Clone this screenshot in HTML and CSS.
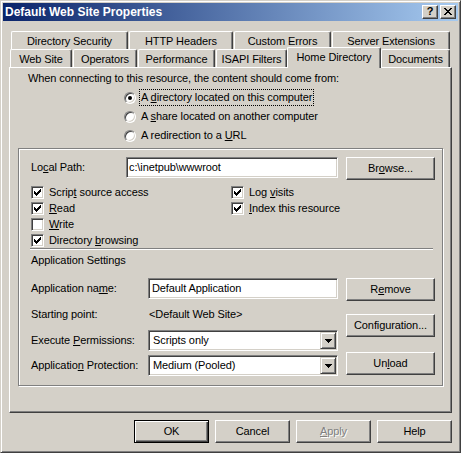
FILE: index.html
```html
<!DOCTYPE html>
<html>
<head>
<meta charset="utf-8">
<title>Default Web Site Properties</title>
<link rel="stylesheet" href="styles.css">
</head>
<body>
<div class="window">
  <div class="titlebar">
    <span class="title">Default Web Site Properties</span>
    <div class="caption-buttons">
      <span class="cap-btn cap-help">?</span>
      <span class="cap-btn cap-close">
        <svg width="8" height="7" viewBox="0 0 8 7" shape-rendering="crispEdges"><path d="M0 0h2v1H0zM6 0h2v1H6zM1 1h2v1H1zM5 1h2v1H5zM2 2h4v1H2zM3 3h2v1H3zM2 4h4v1H2zM1 5h2v1H1zM5 5h2v1H5zM0 6h2v1H0zM6 6h2v1H6z" fill="#000"/></svg>
      </span>
    </div>
  </div>

  <div class="dialog">
    <div class="tabs">
      <div class="tab-row row-back">
        <div class="tab tab-dirsec">Directory Security</div>
        <div class="tab tab-http">HTTP Headers</div>
        <div class="tab tab-errors">Custom Errors</div>
        <div class="tab tab-ext">Server Extensions</div>
      </div>
      <div class="tab-row row-front">
        <div class="tab tab-site">Web Site</div>
        <div class="tab tab-ops">Operators</div>
        <div class="tab tab-perf">Performance</div>
        <div class="tab tab-isapi">ISAPI Filters</div>
        <div class="tab tab-home selected">Home Directory</div>
        <div class="tab tab-docs">Documents</div>
      </div>
    </div>

    <div class="panel">
      <p class="intro">When connecting to this resource, the content should come from:</p>
      <div class="radios">
        <div class="radio-row"><span class="radio checked"></span><span class="radio-label focus">A <u>d</u>irectory located on this computer</span></div>
        <div class="radio-row"><span class="radio"></span><span class="radio-label">A <u>s</u>hare located on another computer</span></div>
        <div class="radio-row"><span class="radio"></span><span class="radio-label">A redirection to a <u>U</u>RL</span></div>
      </div>

      <div class="group">
        <div class="path-row">
          <span class="path-label">Lo<u>c</u>al Path:</span>
          <div class="textbox path-box">c:\inetpub\wwwroot</div>
          <div class="btn btn-side">Br<u>o</u>wse...</div>
        </div>

        <div class="checks">
          <div class="check-col check-col-left">
            <div class="check-item"><span class="checkbox on"><svg width="7" height="7" viewBox="0 0 7 7" shape-rendering="crispEdges"><path d="M6 0h1v1H6zM5 1h2v1H5zM0 2h1v1H0zM4 2h3v1H4zM0 3h2v1H0zM3 3h3v1H3zM0 4h5v1H0zM1 5h3v1H1zM2 6h1v1H2z" fill="#000"/></svg></span><span>Scrip<u>t</u> source access</span></div>
            <div class="check-item"><span class="checkbox on"><svg width="7" height="7" viewBox="0 0 7 7" shape-rendering="crispEdges"><path d="M6 0h1v1H6zM5 1h2v1H5zM0 2h1v1H0zM4 2h3v1H4zM0 3h2v1H0zM3 3h3v1H3zM0 4h5v1H0zM1 5h3v1H1zM2 6h1v1H2z" fill="#000"/></svg></span><span><u>R</u>ead</span></div>
            <div class="check-item"><span class="checkbox"></span><span><u>W</u>rite</span></div>
            <div class="check-item"><span class="checkbox on"><svg width="7" height="7" viewBox="0 0 7 7" shape-rendering="crispEdges"><path d="M6 0h1v1H6zM5 1h2v1H5zM0 2h1v1H0zM4 2h3v1H4zM0 3h2v1H0zM3 3h3v1H3zM0 4h5v1H0zM1 5h3v1H1zM2 6h1v1H2z" fill="#000"/></svg></span><span>Directory <u>b</u>rowsing</span></div>
          </div>
          <div class="check-col">
            <div class="check-item"><span class="checkbox on"><svg width="7" height="7" viewBox="0 0 7 7" shape-rendering="crispEdges"><path d="M6 0h1v1H6zM5 1h2v1H5zM0 2h1v1H0zM4 2h3v1H4zM0 3h2v1H0zM3 3h3v1H3zM0 4h5v1H0zM1 5h3v1H1zM2 6h1v1H2z" fill="#000"/></svg></span><span>Log <u>v</u>isits</span></div>
            <div class="check-item"><span class="checkbox on"><svg width="7" height="7" viewBox="0 0 7 7" shape-rendering="crispEdges"><path d="M6 0h1v1H6zM5 1h2v1H5zM0 2h1v1H0zM4 2h3v1H4zM0 3h2v1H0zM3 3h3v1H3zM0 4h5v1H0zM1 5h3v1H1zM2 6h1v1H2z" fill="#000"/></svg></span><span><u>I</u>ndex this resource</span></div>
          </div>
        </div>

        <div class="separator"></div>
        <div class="section-title">Application Settings</div>

        <div class="app">
          <div class="app-fields">
            <div class="field-row">
              <span class="field-label">Application na<u>m</u>e:</span>
              <div class="textbox app-box">Default Application</div>
            </div>
            <div class="field-row text-row">
              <span class="field-label">Starting point:</span>
              <span class="field-value">&lt;Default Web Site&gt;</span>
            </div>
            <div class="field-row combo-row-1">
              <span class="field-label">Execute <u>P</u>ermissions:</span>
              <div class="textbox combo"><span class="combo-text">Scripts only</span><span class="combo-btn"><svg width="7" height="4" viewBox="0 0 7 4" shape-rendering="crispEdges"><path d="M0 0h7v1H0zM1 1h5v1H1zM2 2h3v1H2zM3 3h1v1H3z" fill="#000"/></svg></span></div>
            </div>
            <div class="field-row combo-row-2">
              <span class="field-label">Applicatio<u>n</u> Protection:</span>
              <div class="textbox combo"><span class="combo-text">Medium (Pooled)</span><span class="combo-btn"><svg width="7" height="4" viewBox="0 0 7 4" shape-rendering="crispEdges"><path d="M0 0h7v1H0zM1 1h5v1H1zM2 2h3v1H2zM3 3h1v1H3z" fill="#000"/></svg></span></div>
            </div>
          </div>
          <div class="app-buttons">
            <div class="btn btn-side">R<u>e</u>move</div>
            <div class="btn btn-side btn-config">Configuration...</div>
            <div class="btn btn-side btn-unload">Un<u>l</u>oad</div>
          </div>
        </div>
      </div>
    </div>

    <div class="dialog-buttons">
      <div class="btn btn-dlg btn-default">OK</div>
      <div class="btn btn-dlg">Cancel</div>
      <div class="btn btn-dlg btn-disabled"><u>A</u>pply</div>
      <div class="btn btn-dlg">Help</div>
    </div>
  </div>
</div>
</body>
</html>
```

FILE: styles.css
```css
* { box-sizing: border-box; }

html, body {
  margin: 0;
  padding: 0;
}

body {
  width: 461px;
  height: 453px;
  overflow: hidden;
  background: #d4d0c8;
  font-family: "Liberation Sans", Arial, sans-serif;
  font-size: 11px;
  line-height: 13px;
  letter-spacing: -0.1px;
  color: #000;
}

u { text-decoration: underline; text-underline-offset: 1px; }

.window {
  width: 461px;
  height: 453px;
  background: #d4d0c8;
  border: 1px solid;
  border-color: #d4d0c8 #404040 #404040 #d4d0c8;
  box-shadow: inset 1px 1px #fff, inset -1px -1px #808080;
  padding: 2px;
  display: flex;
  flex-direction: column;
}

/* ---------- title bar ---------- */
.titlebar {
  height: 18px;
  flex: none;
  background: linear-gradient(to right, #0a246a, #a6caf0);
  display: flex;
  align-items: center;
  justify-content: space-between;
  padding: 0 2px 0 2px;
}

.title {
  color: #fff;
  font-weight: bold;
  font-size: 12px;
  letter-spacing: 0;
}

.caption-buttons {
  display: flex;
  gap: 2px;
}

.cap-btn {
  width: 16px;
  height: 14px;
  background: #d4d0c8;
  border: 1px solid;
  border-color: #fff #404040 #404040 #fff;
  box-shadow: inset -1px -1px #808080;
  display: flex;
  align-items: center;
  justify-content: center;
}

.cap-help {
  font-weight: bold;
  font-size: 11px;
  line-height: 11px;
  padding-bottom: 1px;
}

.cap-close svg { display: block; margin-top: -1px; }

/* ---------- dialog ---------- */
.dialog {
  flex: 1;
  padding: 10px 6px 0 6px;
  display: flex;
  flex-direction: column;
}

.tabs {
  display: flex;
  flex-direction: column;
}

.tab-row {
  display: flex;
  height: 18px;
  align-items: flex-end;
  gap: 1px;
}

.row-back { padding-left: 2px; }
.row-front { padding-left: 1px; }

.tab {
  height: 18px;
  background: #d4d0c8;
  border-top: 1px solid #fff;
  border-left: 1px solid #fff;
  border-right: 1px solid #404040;
  box-shadow: inset -1px 0 #808080;
  border-radius: 2px 2px 0 0;
  display: flex;
  align-items: center;
  justify-content: center;
  padding-top: 1px;
  white-space: nowrap;
}

.tab-dirsec { width: 117px; }
.tab-http { width: 104px; }
.tab-errors { width: 97px; }
.tab-ext { width: 118px; }

.tab-site { width: 62px; }
.tab-ops { width: 64px; }
.tab-perf { width: 77px; }
.tab-isapi { width: 71px; }
.tab-home { width: 92px; }
.tab-docs { width: 69px; }

.tab.selected {
  position: relative;
  z-index: 2;
  height: 21px;
  width: 94px;
  margin: 0 -1px -1px -1px;
  padding-top: 0;
  padding-bottom: 2px;
}

/* ---------- panel ---------- */
.panel {
  height: 346px;
  flex: none;
  border-top: 1px solid #fff;
  border-left: 1px solid #fff;
  border-right: 1px solid #404040;
  border-bottom: 1px solid #404040;
  box-shadow: inset -1px -1px #808080;
  padding: 4px 8px 0 8px;
}

.intro {
  margin: 0 0 0 10px;
  height: 13px;
}

.radios {
  margin: 3px 0 0 106px;
  display: flex;
  flex-direction: column;
}

.radio-row {
  height: 19px;
  display: flex;
  align-items: center;
}

.radio {
  width: 12px;
  height: 12px;
  flex: none;
  border-radius: 50%;
  background: #fff;
  border: 1px solid;
  border-color: #808080 #fff #fff #808080;
  box-shadow: inset 1px 1px #404040, inset -1px -1px #d4d0c8;
  display: flex;
  align-items: center;
  justify-content: center;
}

.radio.checked::after {
  content: "";
  width: 4px;
  height: 4px;
  border-radius: 50%;
  background: #000;
}

.radio-label {
  margin-left: 3px;
  padding: 1px 1px;
  border: 1px dotted transparent;
}

.radio-label.focus { border-color: #000; }

/* ---------- group box ---------- */
.group {
  margin-top: 3px;
  border: 1px solid #808080;
  box-shadow: inset 1px 1px #fff, 1px 1px #fff;
  padding: 8px 7px 9px 12px;
}

.path-row {
  display: flex;
  align-items: flex-start;
}

.path-label {
  width: 95px;
  flex: none;
  line-height: 21px;
}

.textbox {
  height: 21px;
  background: #fff;
  border: 1px solid;
  border-color: #808080 #fff #fff #808080;
  box-shadow: inset 1px 1px #404040, inset -1px -1px #d4d0c8;
  display: flex;
  align-items: center;
  padding-left: 2px;
  white-space: nowrap;
}

.path-box { width: 212px; }

.btn {
  height: 23px;
  background: #d4d0c8;
  border: 1px solid;
  border-color: #fff #404040 #404040 #fff;
  box-shadow: inset -1px -1px #808080;
  display: flex;
  align-items: center;
  justify-content: center;
  white-space: nowrap;
}

.btn-side { width: 89px; flex: none; }
.path-row .btn-side { margin-left: auto; }

.checks {
  margin-top: 6px;
  display: flex;
}

.check-col {
  display: flex;
  flex-direction: column;
  gap: 3px;
}

.check-col-left { width: 200px; }

.check-item {
  height: 13px;
  display: flex;
  align-items: center;
}

.checkbox {
  width: 13px;
  height: 13px;
  flex: none;
  margin-right: 5px;
  background: #fff;
  border: 1px solid;
  border-color: #808080 #fff #fff #808080;
  box-shadow: inset 1px 1px #404040, inset -1px -1px #d4d0c8;
  display: flex;
  align-items: center;
  justify-content: center;
}

.checkbox svg { display: block; }

.separator {
  margin: 1px 2px 0 -1px;
  height: 2px;
  border-top: 1px solid #808080;
  border-bottom: 1px solid #fff;
}

.section-title {
  margin-top: 4px;
  height: 13px;
}

.app {
  margin-top: 11px;
  display: flex;
  align-items: flex-start;
}

.app-fields {
  display: flex;
  flex-direction: column;
}

.field-row {
  display: flex;
  align-items: center;
}

.field-label {
  width: 117px;
  flex: none;
}

.app-box { width: 190px; padding-left: 3px; }

.text-row { margin-top: 9px; height: 13px; }
.field-value { padding-left: 1px; }
.combo-row-1 { margin-top: 9px; }
.combo-row-2 { margin-top: 4px; }

.combo {
  width: 190px;
  padding-left: 4px;
  padding-right: 1px;
}

.combo-text { flex: 1; }

.combo-btn {
  width: 16px;
  height: 17px;
  flex: none;
  background: #d4d0c8;
  border: 1px solid;
  border-color: #d4d0c8 #404040 #404040 #d4d0c8;
  box-shadow: inset 1px 1px #fff, inset -1px -1px #808080;
  display: flex;
  align-items: center;
  justify-content: center;
}

.combo-btn svg { display: block; margin-top: 1px; }

.app-buttons {
  margin-left: auto;
  display: flex;
  flex-direction: column;
}

.btn-config { margin-top: 13px; }
.btn-unload { margin-top: 15px; }

/* ---------- bottom buttons ---------- */
.dialog-buttons {
  margin-top: 7px;
  display: flex;
  justify-content: flex-end;
  gap: 6px;
}

.btn-dlg { width: 75px; }

.btn-default {
  border-color: #000;
  box-shadow: inset 1px 1px #fff, inset -1px -1px #404040, inset -2px -2px #808080;
}

.btn-disabled {
  color: #808080;
  text-shadow: 1px 1px #fff;
}
```
